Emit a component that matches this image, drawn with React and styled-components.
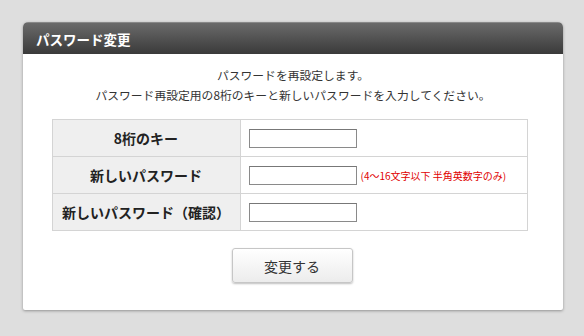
import styled, { createGlobalStyle } from "styled-components";

const GlobalStyle = createGlobalStyle`
  html, body {
    margin: 0;
    padding: 0;
    background: #dedede;
  }
  body {
    font-family: "Noto Sans CJK JP", "Noto Sans", sans-serif;
    color: #333;
  }
`;

const Page = styled.div`
  width: 584px;
  height: 336px;
  padding: 22px 21px 0 23px;
  box-sizing: border-box;
`;

const Panel = styled.section`
  background: #fff;
  border-radius: 5px 5px 2px 2px;
  box-shadow: 0 1px 3px rgba(0, 0, 0, 0.35);
  height: 288px;
  overflow: hidden;
`;

const PanelHeader = styled.h1`
  margin: 0;
  height: 32px;
  padding: 0 0 0 13px;
  display: flex;
  align-items: center;
  background: linear-gradient(#6a6a6a, #3a3a3a);
  border-top: 1px solid #888;
  box-sizing: border-box;
  color: #fff;
  font-size: 13.5px;
  font-weight: bold;
`;

const Body = styled.div`
  display: flex;
  flex-direction: column;
  align-items: center;
  padding: 11px 0 0;
`;

const Intro = styled.p`
  margin: 0;
  text-align: center;
  font-size: 11.8px;
  line-height: 20px;
  color: #333;
`;

const FormTable = styled.table`
  margin-top: 14px;
  margin-right: 7px;
  width: 476px;
  border-collapse: collapse;
`;

const Label = styled.th`
  width: 188px;
  height: 37px;
  padding: 0;
  background: #efefef;
  border: 1px solid #d4d4d4;
  font-size: 14px;
  font-weight: bold;
  color: #222;
  text-align: center;
  box-sizing: border-box;
  white-space: nowrap;
`;

const Field = styled.td`
  border: 1px solid #d4d4d4;
  padding: 0 0 0 8px;
  height: 37px;
  box-sizing: border-box;
`;

const FieldRow = styled.div`
  display: flex;
  align-items: center;
  gap: 4px;
`;

const TextInput = styled.input`
  width: 108px;
  height: 19px;
  box-sizing: border-box;
  border: 1px solid #8a8a8a;
  border-top-color: #777;
  padding: 0 3px;
  font-size: 12px;
  background: #fff;
  margin: 0;
`;

const Note = styled.span`
  color: #e00000;
  font-size: 10px;
  white-space: nowrap;
`;

const SubmitButton = styled.button`
  margin-top: 17px;
  margin-right: 2px;
  width: 121px;
  height: 35px;
  border: 1px solid #c6c6c6;
  border-radius: 3px;
  background: linear-gradient(#ffffff, #ececec);
  box-shadow: 0 1px 2px rgba(0, 0, 0, 0.25);
  font-family: "Noto Sans CJK JP", sans-serif;
  font-size: 14px;
  color: #333;
  cursor: pointer;
`;

const rows = [
  { label: "8桁のキー", type: "text" },
  { label: "新しいパスワード", type: "password", note: "(4～16文字以下 半角英数字のみ)" },
  { label: "新しいパスワード（確認）", type: "password" },
];

export default function App() {
  return (
    <>
      <GlobalStyle />
      <Page>
        <Panel>
          <PanelHeader>パスワード変更</PanelHeader>
          <Body>
            <Intro>
              パスワードを再設定します。
              <br />
              パスワード再設定用の8桁のキーと新しいパスワードを入力してください。
            </Intro>
            <FormTable>
              <tbody>
                {rows.map((row) => (
                  <tr key={row.label}>
                    <Label>{row.label}</Label>
                    <Field>
                      <FieldRow>
                        <TextInput type={row.type} />
                        {row.note && <Note>{row.note}</Note>}
                      </FieldRow>
                    </Field>
                  </tr>
                ))}
              </tbody>
            </FormTable>
            <SubmitButton type="button">変更する</SubmitButton>
          </Body>
        </Panel>
      </Page>
    </>
  );
}
